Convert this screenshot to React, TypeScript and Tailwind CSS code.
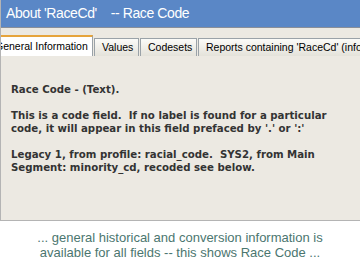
export default function App() {
  const tabs = [
    { label: "Values", w: "w-[45px]" },
    { label: "Codesets", w: "w-[57px]" },
    { label: "Reports containing 'RaceCd' (info)", w: "w-[180px]" },
  ];

  return (
    <div className="w-[360px] h-[271px] bg-white overflow-hidden flex flex-col">
      {/* Window */}
      <div className="h-[221px] shrink-0 flex flex-col bg-[#ece9e2] border-l border-b border-[#b4b4b4]">
        <div className="h-[28px] shrink-0 bg-[#5a87c6] border-b border-[#8a8f99] flex items-center pl-[5px]">
          <span className="text-white text-[14px] tracking-[-0.4px] whitespace-pre font-['Liberation_Sans',sans-serif]">
            About 'RaceCd'    -- Race Code
          </span>
        </div>

        {/* Tabs */}
        <div className="mt-[7px] h-[21px] shrink-0 flex items-end whitespace-nowrap overflow-hidden text-[10.5px] text-black font-['Liberation_Sans',sans-serif]">
          <div className="h-[21px] w-[92px] shrink-0 bg-white border-t-2 border-r border-t-[#e6a43c] border-r-[#9aa2a8] flex items-center overflow-hidden">
            <span className="ml-[-6px]">General Information</span>
          </div>
          {tabs.map((t) => (
            <div
              key={t.label}
              className={`${t.w} h-[18px] shrink-0 pl-[7px] ml-[1px] bg-gradient-to-b from-[#fbfbf8] to-[#e4e2da] border border-b-0 border-[#9aa2a8] flex items-center`}
            >
              {t.label}
            </div>
          ))}
        </div>

        {/* Content */}
        <div className="flex-1 px-[10px] pt-[27px] text-[10.2px] leading-[13px] font-bold text-[#333333] font-['DejaVu_Sans',sans-serif] whitespace-pre">
          <p>Race Code - (Text).</p>
          <p className="mt-[13px]">This is a code field.  If no label is found for a particular</p>
          <p>code, it will appear in this field prefaced by '.' or ':'</p>
          <p className="mt-[13px]">Legacy 1, from profile: racial_code.  SYS2, from Main</p>
          <p>Segment: minority_cd, recoded see below.</p>
        </div>
      </div>

      {/* Caption */}
      <div className="pt-[9px] text-center text-[13px] leading-[15px] text-[#4b766f] font-['Liberation_Sans',sans-serif]">
        <p>... general historical and conversion information is</p>
        <p>available for all fields -- this shows Race Code ...</p>
      </div>
    </div>
  );
}
